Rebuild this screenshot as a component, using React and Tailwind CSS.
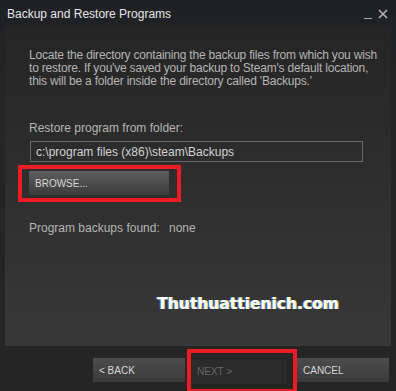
import React from 'react';

// Backup and Restore dialog (Steam style)
const Btn = ({ children, disabled, className = '' }) => (
  <button
    className={
      'h-[24px] text-left pl-[6px] text-[10px] uppercase ' +
      (disabled
        ? 'bg-[#2b2b2b] text-[#666666]'
        : 'bg-gradient-to-b from-[#4c4c4c] to-[#3a3a3a] text-[#d6d6d6]') +
      ' ' + className
    }
  >
    {children}
  </button>
);

export default function App() {
  return (
    <div
      className="w-[396px] h-[391px] overflow-hidden bg-gradient-to-b from-[#1e2024] to-[#252525] to-[20%] flex flex-col"
      style={{ fontFamily: '"Liberation Sans", Arial, sans-serif' }}
    >
      {/* title bar */}
      <div className="h-[28px] flex items-center justify-between pl-[7px] pr-[8px] text-[12px] text-[#e6e6e6]">
        <span>Backup and Restore Programs</span>
        <div className="flex items-center gap-[6px] text-[#b0b0b0]">
          <span className="block w-[8px] h-[1px] bg-[#b0b0b0] mt-[8px]" />
          <svg width="10" height="10" viewBox="0 0 10 10">
            <path d="M1 1 L9 9 M9 1 L1 9" stroke="#b8b8b8" strokeWidth="1.5" />
          </svg>
        </div>
      </div>

      {/* content panel */}
      <div className="mx-[5px] h-[318px] bg-gradient-to-b from-[#252525] to-[#383838] pl-[24px] pt-[21px] text-[12px] text-[#b4b4b4] flex flex-col">
        <p className="leading-[13px] whitespace-nowrap tracking-[-0.2px]">
          Locate the directory containing the backup files from which you wish<br />
          to restore. If you've saved your backup to Steam's default location,<br />
          this will be a folder inside the directory called 'Backups.'
        </p>
        <div className="mt-[33px] leading-[14px]">Restore program from folder:</div>
        <div className="mt-[6px] ml-[1px] w-[333px] h-[21px] border border-[#686868] flex items-center pl-[5px] text-[#d2d2d2]">
          c:\program files (x86)\steam\Backups
        </div>
        <div className="relative mt-[9px] w-[140px]">
          <Btn className="w-[140px] from-[#5e5e5e] to-[#3c3c3c]">BROWSE...</Btn>
          <div className="absolute left-[-11px] top-[-6px] right-[-12px] bottom-[-7px] border-[4px] border-[#ed1c24]" />
        </div>
        <div className="mt-[26px] flex leading-[14px]">
          <span className="w-[140px]">Program backups found:</span>
          <span>none</span>
        </div>
        <div
          className="mt-[58px] ml-[128px] text-white font-bold text-[15.5px]"
          style={{
            fontFamily: '"DejaVu Sans", Verdana, sans-serif',
            textShadow: '-1px 0 #3b7bd6, 1px 0 #e6d36a',
          }}
        >
          Thuthuattienich.com
        </div>
      </div>

      {/* footer buttons */}
      <div className="flex justify-end pr-[7px] mt-[12px]">
        <Btn className="w-[92px]">&lt; BACK</Btn>
        <div className="relative ml-[6px]">
          <Btn disabled className="w-[96px]">NEXT &gt;</Btn>
          <div className="absolute left-[-4px] top-[-9px] right-[-10px] bottom-[-9px] border-[4px] border-[#ed1c24]" />
        </div>
        <Btn className="w-[92px] ml-[10px]">CANCEL</Btn>
      </div>
    </div>
  );
}
